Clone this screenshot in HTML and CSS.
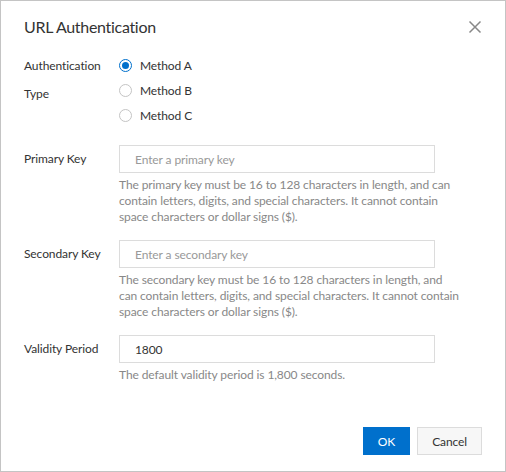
FILE: index.html
```html
<!DOCTYPE html>
<html lang="en">
<head>
<meta charset="utf-8">
<title>URL Authentication</title>
<link rel="stylesheet" href="styles.css">
</head>
<body>
<div class="dialog">
  <header class="dlg-head">
    <h2 class="title">URL Authentication</h2>
    <button class="close" type="button" aria-label="Close">
      <svg width="14" height="14" viewBox="0 0 14 14"><path d="M1.5 1.5 L12.5 12.5 M12.5 1.5 L1.5 12.5" stroke="#888" stroke-width="1.5" fill="none"/></svg>
    </button>
  </header>
  <form class="form">
    <div class="row">
      <div class="label">Authentication Type</div>
      <div class="control">
        <div class="radios">
          <label class="radio"><span class="dot checked"></span>Method A</label>
          <label class="radio"><span class="dot"></span>Method B</label>
          <label class="radio"><span class="dot"></span>Method C</label>
        </div>
      </div>
    </div>
    <div class="row">
      <div class="label">Primary Key</div>
      <div class="control">
        <input class="input" type="text" placeholder="Enter a primary key">
        <p class="help">The primary key must be 16 to 128 characters in length, and can contain letters, digits, and special characters. It cannot contain space characters or dollar signs ($).</p>
      </div>
    </div>
    <div class="row">
      <div class="label">Secondary Key</div>
      <div class="control">
        <input class="input" type="text" placeholder="Enter a secondary key">
        <p class="help">The secondary key must be 16 to 128 characters in length, and can contain letters, digits, and special characters. It cannot contain space characters or dollar signs ($).</p>
      </div>
    </div>
    <div class="row">
      <div class="label">Validity Period</div>
      <div class="control">
        <input class="input" type="text" value="1800">
        <p class="help">The default validity period is 1,800 seconds.</p>
      </div>
    </div>
  </form>
  <footer class="footer">
    <button class="btn btn-primary" type="button">OK</button>
    <button class="btn" type="button">Cancel</button>
  </footer>
</div>
</body>
</html>
```
FILE: styles.css
```css
* { box-sizing: border-box; }
html, body { margin: 0; padding: 0; background: #fff; }
body {
  font-family: Lato, Roboto, "Liberation Sans", sans-serif;
  font-size: 12px;
  letter-spacing: -0.1px;
  color: #333;
}
.dialog {
  width: 506px;
  height: 472px;
  border: 1px solid #c4c4c4;
  display: flex;
  flex-direction: column;
  padding: 0 23px;
  background: #fff;
}
.dlg-head {
  display: flex;
  align-items: center;
  justify-content: space-between;
  padding-top: 15px;
  height: 37px;
}
.title {
  margin: 0;
  font-size: 16px;
  font-weight: 400;
  line-height: 22px;
  letter-spacing: -0.3px;
  color: #333;
}
.close {
  border: 0;
  background: none;
  padding: 0;
  width: 14px;
  height: 14px;
  display: flex;
  cursor: pointer;
}
.form {
  padding-top: 14px;
  display: flex;
  flex-direction: column;
}
.row {
  display: flex;
  margin-bottom: 15px;
}
.label {
  width: 95px;
  flex: none;
  line-height: 28px;
  padding-right: 12px;
  color: #333;
}
.control {
  flex: 1;
  min-width: 0;
}
.radios {
  display: flex;
  flex-direction: column;
  padding: 1px 0 2px;
}
.radio {
  display: flex;
  align-items: center;
  height: 25px;
  gap: 8px;
  color: #333;
}
.dot {
  width: 13px;
  height: 13px;
  border-radius: 50%;
  border: 1px solid #c4c4c4;
  background: #fff;
  position: relative;
  flex: none;
}
.dot.checked {
  border-color: #0070cc;
  border-width: 1.5px;
}
.dot.checked::after {
  content: "";
  position: absolute;
  left: 50%;
  top: 50%;
  width: 7px;
  height: 7px;
  margin: -3.5px 0 0 -3.5px;
  border-radius: 50%;
  background: #0070cc;
}
.input {
  display: block;
  width: 316px;
  height: 28px;
  border: 1px solid #dcdcdc;
  padding: 0 15px;
  font: inherit;
  letter-spacing: inherit;
  color: #333;
  outline: none;
  background: #fff;
}
.input::placeholder { color: #999; }
.help {
  margin: 4px 0 0;
  max-width: 343px;
  line-height: 16px;
  color: #888;
}
.footer {
  margin-top: auto;
  display: flex;
  justify-content: flex-end;
  gap: 7px;
  padding-bottom: 16px;
}
.btn {
  height: 28px;
  min-width: 46px;
  padding: 0 14px;
  font: inherit;
  letter-spacing: inherit;
  color: #333;
  background: #f7f7f7;
  border: 1px solid #dcdcdc;
  cursor: pointer;
}
.btn-primary {
  background: #0070cc;
  border-color: #0070cc;
  color: #fff;
}
```
